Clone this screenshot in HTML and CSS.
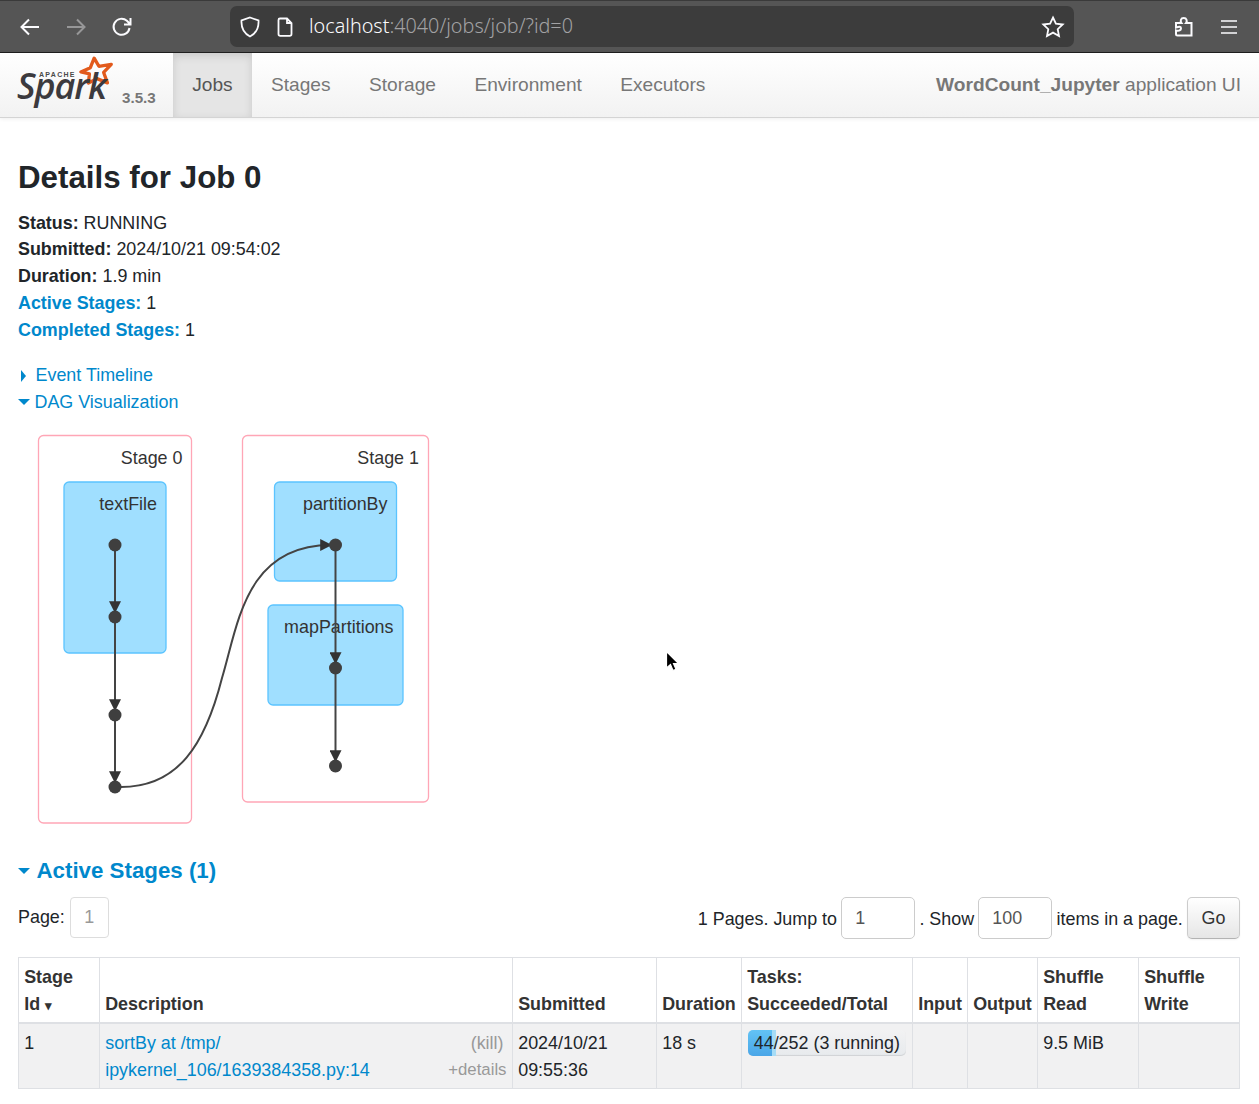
FILE: index.html
```html
<!DOCTYPE html>
<html lang="en">
<head>
    <meta charset="UTF-8">
    <title>WordCount_Jupyter - Details for Job 0</title>
    <link rel="stylesheet" href="styles.css">
</head>
<body>
    <header class="browser-bar">
        <svg class="tool-icon back" viewBox="0 0 24 24"><path d="M21 12H4M11 4.500 3.500 12l7.500 7.500"/></svg>
        <svg class="tool-icon forward" viewBox="0 0 24 24"><path d="M3 12h17M13 4.500l7.500 7.500-7.500 7.500"/></svg>
        <svg class="tool-icon reload" viewBox="0 0 24 24"><path d="M19.500 13a8 8 0 1 1-2.600-7.200L20 9M20.500 3v6.500H14"/></svg>
        <div class="url-bar">
            <svg class="url-icon" viewBox="0 0 24 24"><path d="M12 2.500 20.500 5.500c.5 8-2.500 13-8.500 16-6-3-9-8-8.500-16z"/></svg>
            <svg class="url-icon page-icon" viewBox="0 0 24 24"><path d="M7 3.500h7l4.500 4.500v11a1.800 1.800 0 0 1-1.800 1.800H7.300A1.800 1.800 0 0 1 5.500 19V5a1.500 1.500 0 0 1 1.500-1.500zM14 3.500V8h4.500"/></svg>
            <span class="url-text">localhost<span class="url-dim">:4040/jobs/job/?id=0</span></span>
            <svg class="url-icon star-icon" viewBox="0 0 24 24"><path d="m12 2.500 2.900 6.200 6.800.8-5 4.700 1.300 6.800-6-3.400-6 3.400 1.300-6.800-5-4.700 6.800-.8z"/></svg>
        </div>
        <svg class="tool-icon puzzle" viewBox="0 0 24 24"><path d="M4 8h5.500c-1.500-2-.8-5 2.200-5s3.800 3 2.300 5H19.500v12.500H5.500c-1 0-1.500-.5-1.500-1.500v-3.500c3 1 5-.3 5-2.300S7 11.500 4 12.500z"/></svg>
        <svg class="tool-icon menu" viewBox="0 0 24 24"><path d="M4 6h16M4 12h16M4 18h16"/></svg>
    </header>

    <nav class="navbar">
        <a class="brand">
            <svg class="brand-star" viewBox="0 0 40 34"><path d="M17 3 22 11.500 35 9.500 27 18 31 29 20 24.500 11 29 12 19.500 3 17.500 13 13z"/></svg>
            <span class="brand-apache">APACHE</span>
            <span class="brand-spark">Spark</span>
            <span class="brand-version">3.5.3</span>
        </a>
        <ul class="nav-tabs">
            <li class="active">Jobs</li>
            <li>Stages</li>
            <li>Storage</li>
            <li>Environment</li>
            <li>Executors</li>
        </ul>
        <p class="app-name"><strong>WordCount_Jupyter</strong> application UI</p>
    </nav>

    <main class="content">
        <h3>Details for Job 0</h3>
        <ul class="summary">
            <li><strong>Status:</strong> RUNNING</li>
            <li><strong>Submitted:</strong> 2024/10/21 09:54:02</li>
            <li><strong>Duration:</strong> 1.9 min</li>
            <li><a><strong>Active Stages:</strong></a> 1</li>
            <li><a><strong>Completed Stages:</strong></a> 1</li>
        </ul>

        <div class="toggles">
            <a class="toggle"><span class="arrow-right"></span>Event Timeline</a>
            <a class="toggle"><span class="arrow-down"></span>DAG Visualization</a>
        </div>

        <svg class="dag" viewBox="18 425 430 410" width="430" height="410">
            <defs>
                <marker id="head" viewBox="0 0 10 10" refX="9" refY="5" markerUnits="userSpaceOnUse" markerWidth="12" markerHeight="12" orient="auto">
                    <path class="dag-head" d="M0 0 10 5 0 10z"/>
                </marker>
            </defs>
            <rect class="dag-stage" x="38.500" y="435.500" width="153" height="387.500" rx="5"/>
            <rect class="dag-stage" x="242.500" y="435.500" width="186" height="366.500" rx="5"/>
            <rect class="dag-op" x="64" y="482" width="102" height="171" rx="5"/>
            <rect class="dag-op" x="274.500" y="482" width="122" height="99" rx="5"/>
            <rect class="dag-op" x="268" y="605" width="135" height="100" rx="5"/>
            <text class="dag-label" x="182.500" y="464">Stage 0</text>
            <text class="dag-label" x="419" y="464">Stage 1</text>
            <text class="dag-label" x="157" y="510">textFile</text>
            <text class="dag-label" x="387.500" y="510">partitionBy</text>
            <text class="dag-label" x="393.500" y="633">mapPartitions</text>
            <path class="dag-edge" marker-end="url(#head)" d="M115 545V612"/>
            <path class="dag-edge" marker-end="url(#head)" d="M115 617V710"/>
            <path class="dag-edge" marker-end="url(#head)" d="M115 715V782"/>
            <path class="dag-edge" marker-end="url(#head)" d="M335.500 545V663"/>
            <path class="dag-edge" marker-end="url(#head)" d="M335.500 668V761"/>
            <path class="dag-edge" marker-end="url(#head)" d="M121 787C178 787 205 745 222 678C238 625 245 545 331 545"/>
            <circle class="dag-node" cx="115" cy="545" r="6.500"/>
            <circle class="dag-node" cx="115" cy="617" r="6.500"/>
            <circle class="dag-node" cx="115" cy="715" r="6.500"/>
            <circle class="dag-node" cx="115" cy="787" r="6.500"/>
            <circle class="dag-node" cx="335.500" cy="545" r="6.500"/>
            <circle class="dag-node" cx="335.500" cy="668" r="6.500"/>
            <circle class="dag-node" cx="335.500" cy="766" r="6.500"/>
        </svg>

        <h4 class="section-title"><span class="arrow-down large"></span>Active Stages (1)</h4>

        <div class="pager">
            <div class="pager-left">
                <span>Page:</span>
                <span class="page-box">1</span>
            </div>
            <div class="pager-right">
                <span class="pager-text">1 Pages. Jump to</span>
                <span class="field">1</span>
                <span class="pager-text">. Show</span>
                <span class="field">100</span>
                <span class="pager-text">items in a page.</span>
                <span class="go-btn">Go</span>
            </div>
        </div>

        <table class="stages">
            <colgroup>
                <col class="c-id"><col class="c-desc"><col class="c-sub"><col class="c-dur"><col class="c-task">
                <col class="c-in"><col class="c-out"><col class="c-read"><col class="c-write">
            </colgroup>
            <thead>
                <tr>
                    <th><div>Stage</div><span>Id</span> <span class="sort">▾</span></th>
                    <th>Description</th>
                    <th>Submitted</th>
                    <th>Duration</th>
                    <th>Tasks: Succeeded/Total</th>
                    <th>Input</th>
                    <th>Output</th>
                    <th>Shuffle Read</th>
                    <th>Shuffle Write</th>
                </tr>
            </thead>
            <tbody>
                <tr>
                    <td>1</td>
                    <td class="desc">
                        <div class="desc-side">
                            <span class="kill">(kill)</span>
                            <span class="more">+details</span>
                        </div>
                        <a>sortBy at /tmp/<br>ipykernel_106/1639384358.py:14</a>
                    </td>
                    <td>2024/10/21 09:55:36</td>
                    <td>18 s</td>
                    <td>
                        <div class="progress">
                            <div class="bar-done" style="width: 15.200%"></div>
                            <div class="bar-running" style="width: 2.500%"></div>
                            <span class="progress-text">44/252 (3 running)</span>
                        </div>
                    </td>
                    <td></td>
                    <td></td>
                    <td>9.5 MiB</td>
                    <td></td>
                </tr>
            </tbody>
        </table>
    </main>

    <svg class="cursor" viewBox="0 0 16 24" width="16" height="24"><path d="M1.500 1.500V18l4-3.500 2.500 6 3-1.300-2.500-5.700H13.500z"/></svg>
</body>
</html>
```

FILE: styles.css
```css
* {
    box-sizing: border-box;
}
html, body {
    margin: 0;
    padding: 0;
    height: 1104px;
    overflow: hidden;
}
body {
    font-family: "Liberation Sans", Arial, sans-serif;
    font-size: 17.900px;
    line-height: 26.750px;
    color: #212529;
    background: #fff;
}
a {
    color: #0088cc;
    text-decoration: none;
}
ul {
    list-style: none;
    margin: 0;
    padding: 0;
}

/* browser chrome */
.browser-bar {
    height: 53px;
    display: flex;
    align-items: center;
    background: #555;
    border-top: 1px solid #3a3a3a;
    border-bottom: 1px solid #1f1f1f;
    padding: 0 0 0 18px;
}
.tool-icon {
    width: 24px;
    height: 24px;
    fill: none;
    stroke: #fbfbfe;
    stroke-width: 2;
}
.forward {
    margin-left: 22px;
    opacity: 0.4;
}
.reload {
    margin-left: 22px;
}
.url-bar {
    margin-left: 96px;
    width: 844px;
    height: 41px;
    background: #3c3c3c;
    border-radius: 7px;
    display: flex;
    align-items: center;
    padding: 0 9px 0 8px;
}
.url-icon {
    width: 24px;
    height: 24px;
    fill: none;
    stroke: #fbfbfe;
    stroke-width: 1.800;
    flex: none;
}
.page-icon {
    margin-left: 11px;
}
.url-text {
    margin-left: 12px;
    font-family: "Noto Sans", sans-serif;
    font-size: 19.800px;
    font-weight: 300;
    color: #fbfbfe;
    flex: 1;
}
.url-dim {
    color: #a2a2a4;
}
.puzzle {
    margin-left: 98px;
}
.menu {
    margin-left: 21px;
    stroke-width: 1.600;
}

/* spark navbar */
.navbar {
    height: 65px;
    display: flex;
    background: linear-gradient(#ffffff, #f2f2f2);
    border-bottom: 1px solid #d4d4d4;
    box-shadow: 0 1px 4px rgba(0, 0, 0, 0.07);
    color: #777;
    font-size: 19.150px;
}
.brand {
    position: relative;
    width: 173px;
    flex: none;
}
.brand-star {
    position: absolute;
    left: 78px;
    top: 2px;
    width: 38px;
    height: 33px;
    fill: none;
    stroke: #e25a1c;
    stroke-width: 3.500;
    stroke-linejoin: round;
}
.brand-apache {
    position: absolute;
    left: 39px;
    top: 18px;
    font-size: 7px;
    font-weight: 700;
    line-height: 8px;
    letter-spacing: 1.300px;
    color: #4a4a4a;
}
.brand-spark {
    position: absolute;
    left: 17px;
    top: 26px;
    font-family: "Open Sans", sans-serif;
    font-style: italic;
    font-weight: 600;
    font-size: 36px;
    line-height: 14px;
    letter-spacing: -1.100px;
    color: #3c3a3e;
}
.brand-version {
    position: absolute;
    left: 122px;
    top: 32px;
    font-size: 15.200px;
    font-weight: 700;
    line-height: 26px;
    color: #777;
}
.nav-tabs {
    display: flex;
}
.nav-tabs li {
    padding: 0 19.200px;
    line-height: 64px;
}
.nav-tabs .active {
    color: #555;
    background: #e5e5e5;
    box-shadow: inset 0 3px 8px rgba(0, 0, 0, 0.125);
}
.app-name {
    margin: 0 18px 0 auto;
    line-height: 64px;
}

/* page content */
.content {
    padding: 0 19px 0 18px;
}
h3 {
    margin: 34px 0 6px;
    font-size: 31.300px;
    line-height: 51.500px;
}
.summary strong {
    font-weight: 700;
}
.toggles {
    margin-top: 19px;
    display: flex;
    flex-direction: column;
}
.toggle {
    display: flex;
    align-items: center;
}
.arrow-right {
    width: 0;
    height: 0;
    margin: 0 9.500px 0 3px;
    border-left: 5.500px solid #0088cc;
    border-top: 6.500px solid transparent;
    border-bottom: 6.500px solid transparent;
}
.arrow-down {
    width: 0;
    height: 0;
    margin: 0 4.500px 0 0;
    border-top: 6px solid #0088cc;
    border-left: 6px solid transparent;
    border-right: 6px solid transparent;
}
.dag {
    display: block;
    margin-top: 9px;
}
.dag-stage {
    fill: #fff;
    stroke: #ffa6b6;
    stroke-width: 1.300;
}
.dag-op {
    fill: #a0dfff;
    stroke: #5bc4ff;
    stroke-width: 1.300;
}
.dag-label {
    font-size: 17.900px;
    fill: #333;
    text-anchor: end;
}
.dag-edge {
    fill: none;
    stroke: #444;
    stroke-width: 2;
}
.dag-head {
    fill: #333;
}
.dag-node {
    fill: #3f3f3f;
}
.section-title {
    margin: 19px 0 0;
    display: flex;
    align-items: center;
    font-size: 22.300px;
    line-height: 34px;
    color: #0088cc;
}
.arrow-down.large {
    margin-right: 6.500px;
}

/* pagination row */
.pager {
    margin-top: 9px;
    display: flex;
    justify-content: space-between;
    align-items: center;
}
.pager-left,
.pager-right {
    display: flex;
    align-items: center;
    gap: 5px;
}
.pager-right {
    gap: 4.200px;
}
.pager-text {
    padding-top: 3px;
}
.page-box {
    width: 39px;
    height: 41px;
    border: 1px solid #ddd;
    border-radius: 4px;
    color: #999;
    text-align: center;
    line-height: 39px;
}
.field {
    width: 74px;
    height: 42px;
    padding-left: 13px;
    border: 1px solid #ccc;
    border-radius: 5px;
    color: #555;
    line-height: 40px;
    background: #fff;
}
.go-btn {
    width: 53px;
    height: 42px;
    border: 1px solid #ccc;
    border-bottom-color: #b3b3b3;
    border-radius: 5px;
    background: linear-gradient(#ffffff, #e6e6e6);
    box-shadow: 0 1px 2px rgba(0, 0, 0, 0.05);
    color: #333;
    text-align: center;
    line-height: 40px;
}

/* stage table */
.stages {
    margin-top: 18px;
    width: 1221px;
    table-layout: fixed;
    border-collapse: collapse;
}
.c-id { width: 81px; }
.c-desc { width: 413px; }
.c-sub { width: 144px; }
.c-dur { width: 85px; }
.c-task { width: 171px; }
.c-in { width: 55px; }
.c-out { width: 70px; }
.c-read { width: 101px; }
.c-write { width: 101px; }
.stages th,
.stages td {
    border: 1px solid #dee0e4;
    padding: 6.500px 5.500px 4px 5.200px;
    text-align: left;
    vertical-align: bottom;
    line-height: 26.750px;
}
.stages th {
    padding: 6px 5.500px 4.500px 5.200px;
    color: #333;
    border-bottom: 2.500px solid #dee0e4;
}
.stages td {
    background: #f1f1f2;
    vertical-align: top;
}
.sort {
    font-size: 13px;
    line-height: 0;
}
.desc-side {
    float: right;
    display: flex;
    flex-direction: column;
    align-items: flex-end;
    color: #999;
}
.kill {
    margin-right: 3px;
}
.more {
    font-size: 16.800px;
}
.progress {
    position: relative;
    height: 26px;
    margin: 0 0.500px;
    border-radius: 5px;
    overflow: hidden;
    display: flex;
    background: linear-gradient(#f2f2f3, #e7eaed);
    box-shadow: inset 0 -1px 1px rgba(0, 0, 0, 0.1);
}
.bar-done {
    background: linear-gradient(#62c3f5, #4aa6e8);
}
.bar-running {
    background: #a6dcf6;
}
.progress-text {
    position: absolute;
    left: 0;
    right: 0;
    top: 0;
    text-align: center;
    line-height: 26px;
}
.cursor {
    position: absolute;
    left: 665px;
    top: 650px;
    fill: #000;
    stroke: #fff;
    stroke-width: 1.200;
}
```
